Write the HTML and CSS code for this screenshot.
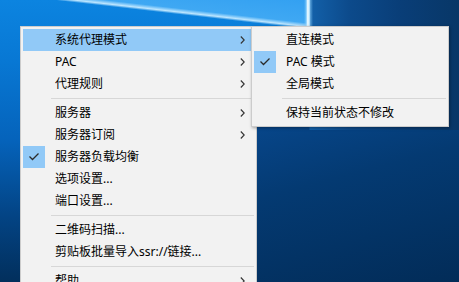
FILE: index.html
```html
<!DOCTYPE html>
<html lang="zh-CN">
<head>
<meta charset="utf-8">
<title>菜单</title>
<link rel="stylesheet" href="styles.css">
</head>
<body>
<div class="desktop">
  <div class="menu main">
    <div class="item hl"><span class="gutter"></span><span class="label">系统代理模式</span><svg class="arrow" width="5" height="8" viewBox="0 0 5 8"><polyline points="0.8,0.5 4.2,4 0.8,7.5"/></svg></div>
    <div class="item"><span class="gutter"></span><span class="label">PAC</span><svg class="arrow" width="5" height="8" viewBox="0 0 5 8"><polyline points="0.8,0.5 4.2,4 0.8,7.5"/></svg></div>
    <div class="item"><span class="gutter"></span><span class="label">代理规则</span><svg class="arrow" width="5" height="8" viewBox="0 0 5 8"><polyline points="0.8,0.5 4.2,4 0.8,7.5"/></svg></div>
    <div class="sep"></div>
    <div class="item"><span class="gutter"></span><span class="label">服务器</span><svg class="arrow" width="5" height="8" viewBox="0 0 5 8"><polyline points="0.8,0.5 4.2,4 0.8,7.5"/></svg></div>
    <div class="item"><span class="gutter"></span><span class="label">服务器订阅</span><svg class="arrow" width="5" height="8" viewBox="0 0 5 8"><polyline points="0.8,0.5 4.2,4 0.8,7.5"/></svg></div>
    <div class="item"><span class="gutter checked"><svg width="22" height="22" viewBox="0 0 22 22"><polyline points="6.5,10.5 9.5,13.5 15.5,7.5"/></svg></span><span class="label">服务器负载均衡</span></div>
    <div class="item"><span class="gutter"></span><span class="label">选项设置...</span></div>
    <div class="item"><span class="gutter"></span><span class="label">端口设置...</span></div>
    <div class="sep"></div>
    <div class="item"><span class="gutter"></span><span class="label">二维码扫描...</span></div>
    <div class="item"><span class="gutter"></span><span class="label">剪贴板批量导入ssr://链接...</span></div>
    <div class="sep"></div>
    <div class="item"><span class="gutter"></span><span class="label">帮助</span><svg class="arrow" width="5" height="8" viewBox="0 0 5 8"><polyline points="0.8,0.5 4.2,4 0.8,7.5"/></svg></div>
  </div>
  <div class="menu sub">
    <div class="item"><span class="gutter"></span><span class="label">直连模式</span></div>
    <div class="item"><span class="gutter checked"><svg width="22" height="22" viewBox="0 0 22 22"><polyline points="6.5,10.5 9.5,13.5 15.5,7.5"/></svg></span><span class="label">PAC 模式</span></div>
    <div class="item"><span class="gutter"></span><span class="label">全局模式</span></div>
    <div class="sep"></div>
    <div class="item"><span class="gutter"></span><span class="label">保持当前状态不修改</span></div>
  </div>
</div>
</body>
</html>
```
FILE: styles.css
```css
html, body {
  margin: 0;
  padding: 0;
}
body {
  font-family: "Noto Sans", "Noto Sans CJK SC", sans-serif;
  font-size: 12px;
  color: #000;
}
.desktop {
  position: relative;
  width: 459px;
  height: 282px;
  overflow: hidden;
  box-sizing: border-box;
  padding: 26px 0 0 20px;
  background:
    linear-gradient(to right, transparent 304px, rgba(150,215,255,0.55) 306px, #e2f6ff 307.5px, #d6f2ff 309px, rgba(150,215,255,0.5) 310.5px, transparent 313px) 0 0 / 100% 30px no-repeat,
    linear-gradient(to right, transparent 309px, #1361aa 310px, #0c4a8b 350px, #093e78 400px, #083767 100%) 0 0 / 100% 130px no-repeat,
    linear-gradient(165deg, #07468a 0%, #043a72 35%, #022c58 100%) 256px 126px / 203px 156px no-repeat,
    linear-gradient(186.5deg, #2a9bf0 0px, #3fa8f3 40px, #bde6ff 43.7px, rgba(20,130,225,0) 46px) 0 0 / 100% 30px no-repeat,
    linear-gradient(to bottom, #0c84e0 0px, #0878d4 60px, #0563bb 140px, #034485 215px, #022f5c 282px);
}
.menu {
  box-sizing: border-box;
  background: #f2f2f2;
  border: 1px solid #cccccc;
  padding: 2px;
  display: flex;
  flex-direction: column;
}
.main {
  width: 237px;
}
.sub {
  position: absolute;
  left: 251px;
  top: 26px;
  width: 198px;
  box-shadow: 1px 1px 3px rgba(0, 0, 0, 0.35);
}
.item {
  height: 22px;
  display: flex;
  align-items: center;
  flex: none;
}
.item.hl {
  background: #91c9f7;
}
.gutter {
  width: 22px;
  height: 22px;
  flex: none;
  display: flex;
}
.gutter.checked {
  background: #91c9f7;
}
.gutter svg polyline {
  fill: none;
  stroke: #2b2b2b;
  stroke-width: 1.3;
}
.label {
  flex: 1;
  margin-left: 10px;
  line-height: 22px;
  white-space: nowrap;
}
.arrow {
  flex: none;
  margin-right: 9px;
}
.arrow polyline {
  fill: none;
  stroke: #333;
  stroke-width: 1.1;
}
.sep {
  height: 7px;
  flex: none;
  display: flex;
  align-items: center;
  padding-left: 28px;
}
.sep::before {
  content: "";
  flex: 1;
  height: 1px;
  background: #d7d7d7;
}
```
